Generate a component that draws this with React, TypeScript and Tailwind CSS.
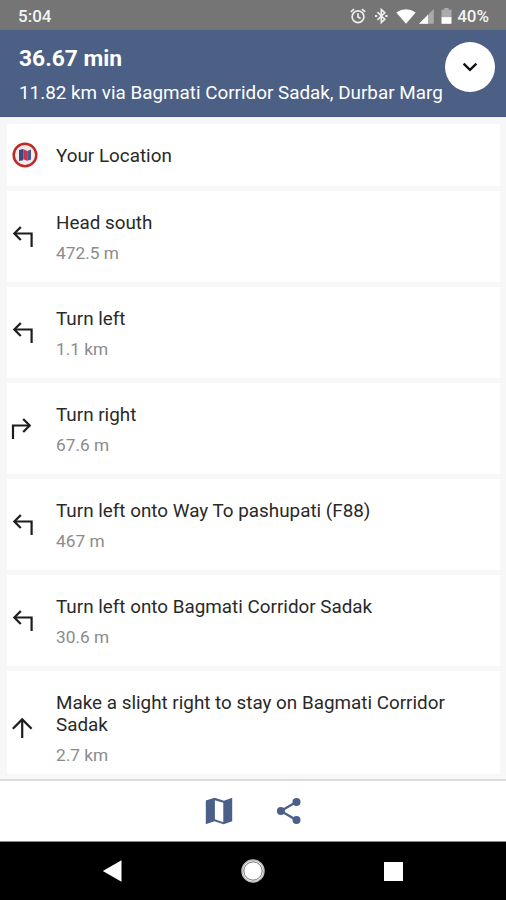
import type { ReactNode } from "react";

type Turn = "left" | "right" | "straight";

function LeftArrow() {
  return (
    <svg width="22" height="24" viewBox="0 0 22 24" fill="none" stroke="#1c1c1c" strokeWidth="2.2">
      <path d="M19.600 22V8.500H2.800" />
      <path d="M8.800 1.900L2.300 8.500l6.500 6.500" />
    </svg>
  );
}

function RightArrow() {
  return (
    <svg width="22" height="24" viewBox="0 0 22 24" fill="none" stroke="#1c1c1c" strokeWidth="2.2">
      <path d="M2 22V8.500H18.400" />
      <path d="M12.200 1.900L18.700 8.500l-6.500 6.500" />
    </svg>
  );
}

function UpArrow() {
  return (
    <svg width="22" height="24" viewBox="0 0 22 24" fill="none" stroke="#1c1c1c" strokeWidth="2.2">
      <path d="M11.2 22V3.6" />
      <path d="M1.8 12.8l9.4-9.4 9.4 9.4" />
    </svg>
  );
}

const arrows: Record<Turn, ReactNode> = {
  left: <LeftArrow />,
  right: <RightArrow />,
  straight: <UpArrow />,
};

const steps: { turn: Turn; title: string; distance: string }[] = [
  { turn: "left", title: "Head south", distance: "472.5 m" },
  { turn: "left", title: "Turn left", distance: "1.1 km" },
  { turn: "right", title: "Turn right", distance: "67.6 m" },
  { turn: "left", title: "Turn left onto Way To pashupati (F88)", distance: "467 m" },
  { turn: "left", title: "Turn left onto Bagmati Corridor Sadak", distance: "30.6 m" },
  { turn: "straight", title: "Make a slight right to stay on Bagmati Corridor Sadak", distance: "2.7 km" },
];

function StatusBar() {
  return (
    <div className="flex h-[30px] items-center justify-between bg-[#757575] pt-[2px] pr-[17px] pl-[18px] text-[#f4f4f4]">
      <span className="pt-px text-[17px] font-medium">5:04</span>
      <div className="flex items-center">
        <svg width="16" height="16" viewBox="0 0 16 16" fill="none" stroke="#eeeeee" strokeWidth="1.7">
          <circle cx="8" cy="8.7" r="5.9" />
          <path d="M8 5.3v3.8l2.6 1.500M.8 3.8L4 1.1M15.2 3.8L12 1.1" />
        </svg>
        <svg className="ml-[8px]" width="15" height="16" viewBox="0 0 15 16" fill="none" stroke="#eeeeee" strokeWidth="1.6">
          <path d="M3.4 4.2l7.4 7-3.5 3.3V1.5l3.5 3.3-7.4 7" />
          <path d="M1 8h2.2M11.4 8h2.2" strokeWidth="2" />
        </svg>
        <svg className="ml-[7px]" width="20" height="15" viewBox="0 0 20 15" fill="#ffffff">
          <path d="M.3 3.4Q10-3 19.7 3.4L10 14.8z" />
        </svg>
        <svg className="ml-[3px]" width="15" height="15" viewBox="0 0 15 15">
          <path d="M14.8 0v14.8H0z" fill="#a9a9a9" />
          <path d="M9 5.8v9H0z" fill="#ffffff" />
        </svg>
        <svg className="ml-[7px]" width="11" height="16" viewBox="0 0 11 16">
          <path d="M3.2 0h4.4v1.7H10.500V10H.5V1.700h2.700z" fill="#acacac" />
          <path d="M.5 9.200h10V15.800H.5z" fill="#ffffff" />
        </svg>
        <span className="ml-[5px] pt-px text-[17px] font-medium">40%</span>
      </div>
    </div>
  );
}

function Header() {
  return (
    <header className="relative h-[87px] border-b border-[#46538a] bg-[#4c6085] pt-[14px] pl-[19px] text-white">
      <h1 className="text-[22.8px] leading-[30px] font-bold">36.67 min</h1>
      <p className="mt-[7px] text-[18.85px] leading-[24px] whitespace-nowrap">11.82 km via Bagmati Corridor Sadak, Durbar Marg</p>
      <button className="absolute top-[12px] right-[11px] flex size-[50px] items-center justify-center rounded-full bg-white">
        <svg width="16" height="10" viewBox="0 0 16 10" fill="none" stroke="#111111" strokeWidth="2.3">
          <path d="M1.600 1.600L8 7.800l6.400-6.200" />
        </svg>
      </button>
    </header>
  );
}

function LocationBadge() {
  return (
    <svg width="26" height="26" viewBox="0 0 26 26">
      <circle cx="13" cy="13" r="11.300" fill="#f1ebeb" stroke="#bd2a25" strokeWidth="2.500" />
      <path d="M7 8l4.200-1v11.300L7 19z" fill="#394a86" />
      <path d="M11.200 7l4 2v9.800l-4-1.600z" fill="#c9354c" />
      <path d="M15.200 9L19 7.500v10l-3.800 1.300z" fill="#485a91" />
    </svg>
  );
}

export default function App() {
  return (
    <div className="flex h-[900px] w-[506px] flex-col overflow-hidden bg-[#f7f7f7] font-['Roboto',sans-serif]">
      <StatusBar />
      <Header />
      <main className="flex h-[662px] flex-col gap-[5px] pt-[7px] pr-[6px] pl-[7px]">
        <div className="flex h-[62px] items-center bg-white pl-[5px]">
          <LocationBadge />
          <span className="ml-[18px] pt-[2px] text-[18.85px] text-[#292929]">Your Location</span>
        </div>
        {steps.map((step) => (
          <div
            key={step.title}
            className={`flex items-center bg-white ${step.turn === "straight" ? "h-[103px] pt-[10px]" : "h-[91px]"} ${step.turn === "left" ? "pl-[5px]" : "pl-[4px]"}`}
          >
            {arrows[step.turn]}
            <div className={step.turn === "left" ? "ml-[22px] w-[410px] pt-px" : "ml-[23px] w-[410px] pt-px"}>
              <p className="text-[18.85px] leading-[22px] text-[#292929]">{step.title}</p>
              <p className="mt-[9px] text-[17.3px] leading-[20px] text-[#8b8b8b]">{step.distance}</p>
            </div>
          </div>
        ))}
      </main>
      <footer className="flex h-[63px] items-center justify-center gap-[43px] border-t-2 border-b border-t-[#dcdcdc] border-b-[#8c8c8c] bg-white">
        <svg width="28" height="28" viewBox="0 0 28 28">
          <path fill="#4b6089" fillRule="evenodd" d="M.8 3.400L9.700.7l9.200 3L27.200.7v23.600l-8.600 3-9.200-3-8.600 3zM9.900 3.200v19l8.400 3V5.800z" />
        </svg>
        <svg width="26" height="28" viewBox="0 0 26 28" fill="#4b6089">
          <path d="M20.300 5L4.800 14l15.500 9" fill="none" stroke="#4b6089" strokeWidth="2.300" />
          <circle cx="20.500" cy="5" r="4" />
          <circle cx="4.900" cy="14" r="4" />
          <circle cx="20.500" cy="23" r="4" />
        </svg>
      </footer>
      <nav className="flex h-[58px] items-center bg-black pl-[102px]">
        <svg width="20" height="22" viewBox="0 0 20 22" fill="#ffffff">
          <path d="M.8 11L19.500.2v21.600z" />
        </svg>
        <svg className="ml-[119px]" width="24" height="24" viewBox="0 0 24 24">
          <circle cx="12" cy="12" r="11" fill="#ffffff" stroke="#bdbdbd" strokeWidth="1.500" />
          <circle cx="12" cy="12" r="9.200" fill="none" stroke="#707070" strokeWidth="1" />
        </svg>
        <div className="ml-[119px] size-[19px] bg-white" />
      </nav>
    </div>
  );
}
